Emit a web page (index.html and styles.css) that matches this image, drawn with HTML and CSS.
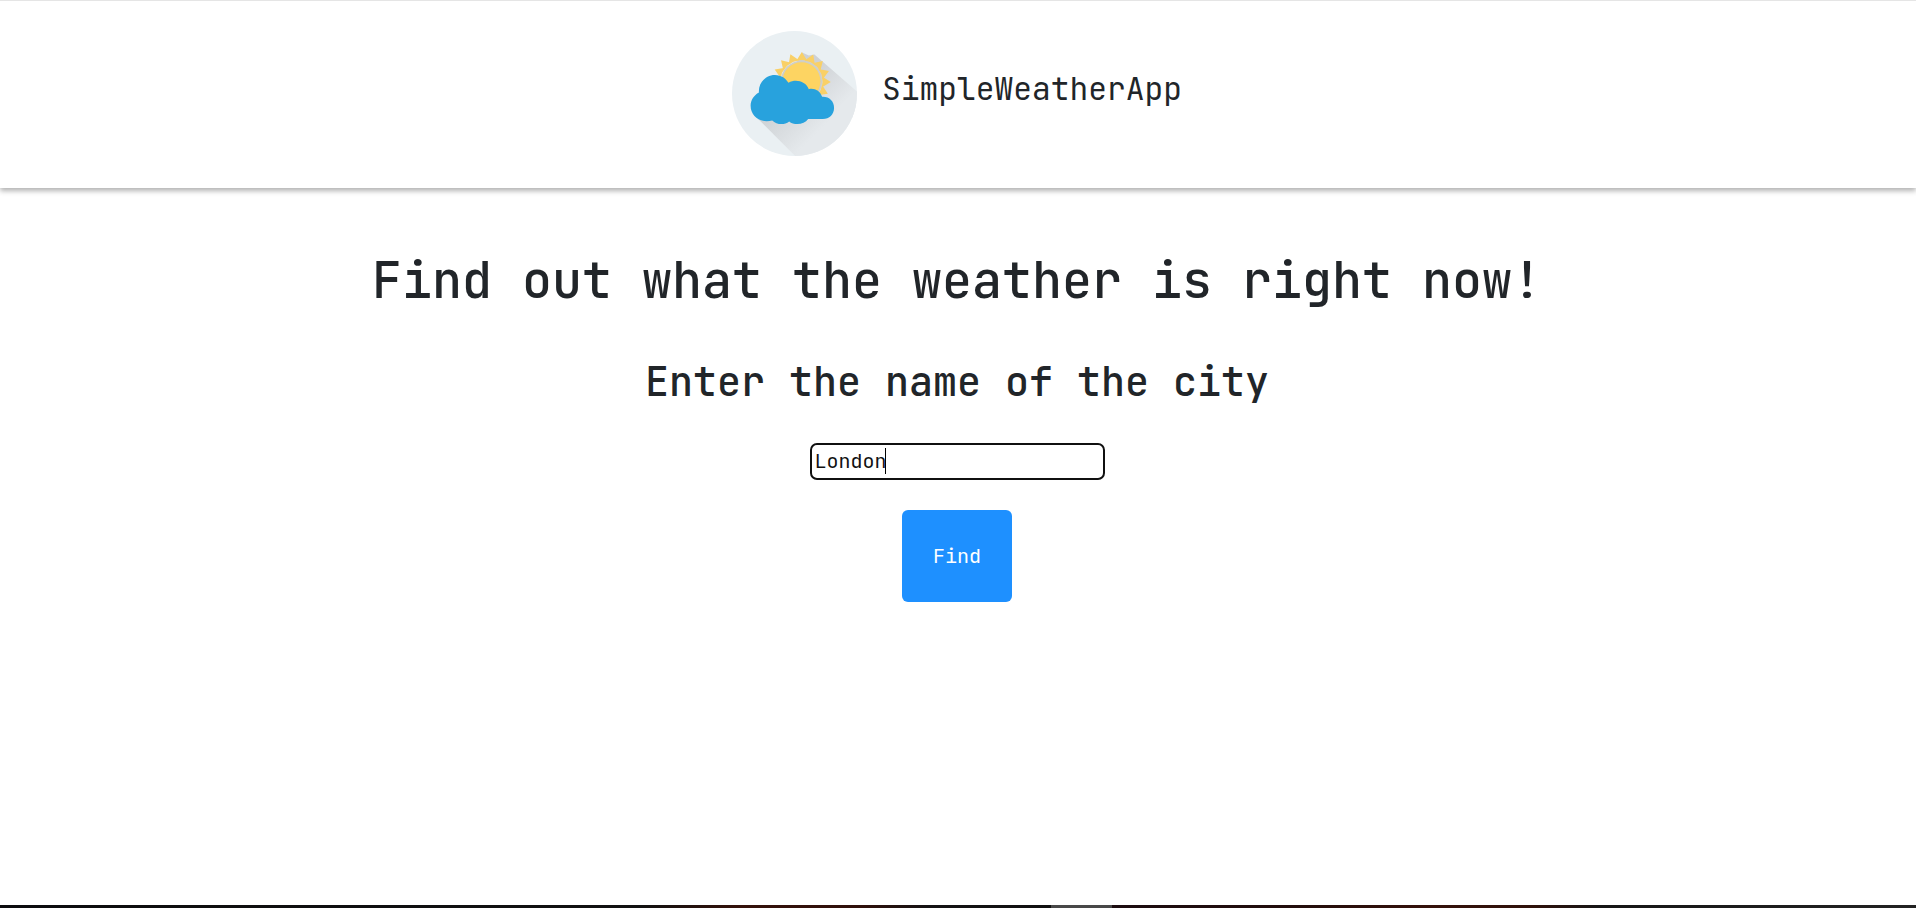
FILE: index.html
```html
<!DOCTYPE html>
<html lang="en">
<head>
<meta charset="utf-8">
<title>SimpleWeatherApp</title>
<link rel="stylesheet" href="styles.css">
</head>
<body>
<header class="header">
  <svg class="logo" viewBox="36 32 376 376" aria-hidden="true">
    <defs>
      <clipPath id="disc"><circle cx="224" cy="220" r="188"/></clipPath>
      <linearGradient id="shade" gradientUnits="userSpaceOnUse" x1="190" y1="240" x2="290" y2="340">
        <stop offset="0" stop-color="#cfd3d6"/><stop offset="1" stop-color="#e5e9ec"/>
      </linearGradient>
      <linearGradient id="shade2" gradientUnits="userSpaceOnUse" x1="290" y1="130" x2="390" y2="230">
        <stop offset="0" stop-color="#ced1d5"/><stop offset="1" stop-color="#e5e9ec"/>
      </linearGradient>
    </defs>
    <circle cx="224" cy="220" r="188" fill="#eaf0f3"/>
    <g clip-path="url(#disc)">
      <path d="M108 290 L240 422 L440 422 L440 250 L330 240Z" fill="url(#shade)"/>
      <path d="M247 97 L267 106 L284 103 L440 238 L412 300 L300 240 L230 130Z" fill="url(#shade2)"/>
    </g>
    <circle cx="245" cy="183" r="62" fill="#cfcfc8"/>
    <circle cx="245" cy="183" r="57" fill="#fdd462"/>
    <g fill="#f9d067">
      <path id="ray" d="M229 122 L246 95 L263 122 Q246 117 229 122Z"/>
      <use href="#ray" transform="rotate(23 245 183)"/>
      <use href="#ray" transform="rotate(46 245 183)"/>
      <use href="#ray" transform="rotate(69 245 183)"/>
      <use href="#ray" transform="rotate(91 245 183)"/>
      <use href="#ray" transform="rotate(115 245 183)"/>
      <use href="#ray" transform="rotate(-23 245 183)"/>
      <use href="#ray" transform="rotate(-45 245 183)"/>
      <use href="#ray" transform="rotate(-67 245 183)"/>
    </g>
    <path d="M117 217 C115 188 137 164 165 164 C184 164 199 175 206 188 C228 175 258 184 267 207 C284 203 301 212 307 230 C329 229 343 244 343 263 C343 283 329 297 309 297 L265 297 C253 315 222 316 208 304 C193 316 170 314 157 301 C123 311 92 289 92 257 C92 240 102 225 117 217Z" fill="#28a2dd"/>
  </svg>
  <span class="brand">SimpleWeatherApp</span>
</header>
<main class="content">
  <h1 class="title">Find out what the weather is right now!</h1>
  <h2 class="subtitle">Enter the name of the city</h2>
  <div class="field"><span>London</span><i class="caret"></i></div>
  <button class="find">Find</button>
</main>
<footer class="strip"><div class="strip-tab"></div></footer>
</body>
</html>
```
FILE: styles.css
```css
* { box-sizing: border-box; }

body {
  margin: 0;
  height: 908px;
  overflow: hidden;
  display: flex;
  flex-direction: column;
  background: #fff;
  color: #212529;
  font-family: "JetBrains Mono", "DejaVu Sans Mono", monospace;
}

.header {
  flex: none;
  height: 188px;
  padding: 30px 2px 0 0;
  border-top: 1px solid #e5e5e5;
  box-shadow: 0 3px 5px rgba(0, 0, 0, .3);
  display: flex;
  justify-content: center;
  align-items: flex-start;
  gap: 25px;
}

.logo { width: 125px; height: 125px; }

.brand {
  margin-top: 39px;
  font-size: 31.25px;
  line-height: 37px;
}

.content {
  flex: 1;
  display: flex;
  flex-direction: column;
  align-items: center;
  padding: 62px 2px 0 0;
}

.title {
  margin: 0;
  font-size: 50px;
  line-height: 60px;
  font-weight: 500;
}

.subtitle {
  margin: 48px 0 0;
  font-size: 40px;
  line-height: 48px;
  font-weight: 500;
}

.field {
  width: 295px;
  height: 37px;
  margin-top: 37px;
  padding: 0 0 1px 3px;
  border: 2px solid #101010;
  border-radius: 7px;
  display: flex;
  align-items: center;
  color: #111;
  font-size: 20px;
  line-height: 27px;
}

.caret { width: 1px; height: 26px; margin-left: -2px; background: #000; }

.find {
  width: 110px;
  height: 92px;
  margin-top: 30px;
  padding: 0;
  border: 0;
  border-radius: 6px;
  background: #1e90ff;
  color: #fff;
  font: 20px/27px "JetBrains Mono", "DejaVu Sans Mono", monospace;
}

.strip {
  flex: none;
  height: 3px;
  padding-left: 1051px;
  background: linear-gradient(90deg, #0c0c0e 0, #111 640px, #35110a 740px, #30100a 860px, #141214 930px, #101010 1050px, #1c0c10 1112px, #220d0c 1290px, #35110a 1430px, #30110a 1530px, #161616 1600px, #232323 1916px);
}

.strip-tab { width: 61px; height: 3px; background: #484848; }
```
